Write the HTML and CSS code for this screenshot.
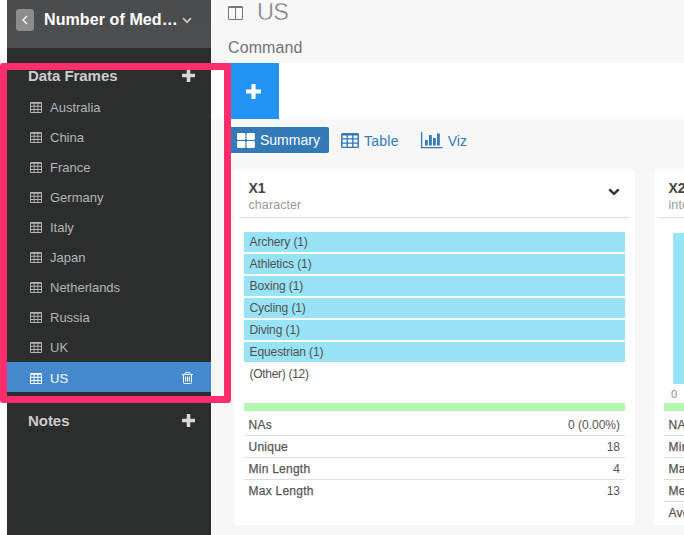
FILE: index.html
```html
<!DOCTYPE html>
<html lang="en">
<head>
<meta charset="utf-8">
<title>US - Data Frames</title>
<link rel="stylesheet" href="styles.css">
</head>
<body>
<svg class="defs" width="0" height="0">
  <symbol id="table" viewBox="0 0 12 10" preserveAspectRatio="none"><path fill="currentColor" fill-rule="evenodd" d="M1 0h10a1 1 0 0 1 1 1v8a1 1 0 0 1-1 1H1a1 1 0 0 1-1-1V1a1 1 0 0 1 1-1zM1 1.6v1.9h2.7V1.6zM4.6 1.6v1.9h2.8V1.6zM8.3 1.6v1.9H11V1.6zM1 4.4v1.9h2.7V4.4zM4.6 4.4v1.9h2.8V4.4zM8.3 4.4v1.9H11V4.4zM1 7.2v1.9h2.7V7.2zM4.6 7.2v1.9h2.8V7.2zM8.3 7.2v1.9H11V7.2z"/></symbol>
  <symbol id="plus" viewBox="0 0 13 13"><path fill="currentColor" d="M5.2 0h2.6q.5 0 .5.5v4.2h4.2q.5 0 .5.5v2.6q0 .5-.5.5H8.3v4.2q0 .5-.5.5H5.2q-.5 0-.5-.5V8.3H.5Q0 8.3 0 7.8V5.2q0-.5.5-.5h4.2V.5q0-.5.5-.5z"/></symbol>
</svg>
<div class="app">
  <aside class="sidebar">
    <header class="project">
      <span class="back"><svg width="6" height="10" viewBox="0 0 6 10"><path d="M5 1 1 5l4 4" fill="none" stroke="#fff" stroke-width="1.3"/></svg></span>
      <span class="project-name">Number of Med…</span>
      <svg class="caret" width="10" height="7" viewBox="0 0 10 7"><path d="M1 1.2 5 5.2l4-4" fill="none" stroke="#c3c4c5" stroke-width="1.7"/></svg>
    </header>
    <h2 class="section"><span>Data Frames</span><svg width="13" height="13"><use href="#plus"/></svg></h2>
    <ul class="frames">
      <li><svg width="12" height="11"><use href="#table"/></svg><span>Australia</span></li>
      <li><svg width="12" height="11"><use href="#table"/></svg><span>China</span></li>
      <li><svg width="12" height="11"><use href="#table"/></svg><span>France</span></li>
      <li><svg width="12" height="11"><use href="#table"/></svg><span>Germany</span></li>
      <li><svg width="12" height="11"><use href="#table"/></svg><span>Italy</span></li>
      <li><svg width="12" height="11"><use href="#table"/></svg><span>Japan</span></li>
      <li><svg width="12" height="11"><use href="#table"/></svg><span>Netherlands</span></li>
      <li><svg width="12" height="11"><use href="#table"/></svg><span>Russia</span></li>
      <li><svg width="12" height="11"><use href="#table"/></svg><span>UK</span></li>
      <li class="active"><svg width="12" height="11"><use href="#table"/></svg><span>US</span>
        <svg class="trash" width="11" height="12" viewBox="0 0 11 12"><path d="M0 2.5h11M3.3 2.5V1q0-.5.5-.5h3.4q.5 0 .5.5v1.5M1.5 2.5v8q0 1 1 1h6q1 0 1-1v-8M3.7 4.5v5M5.5 4.5v5M7.3 4.5v5" fill="none" stroke="#fff" stroke-width="1"/></svg></li>
    </ul>
    <h2 class="section notes"><span>Notes</span><svg width="13" height="13"><use href="#plus"/></svg></h2>
  </aside>
  <main class="content">
    <div class="title"><svg width="15" height="14" viewBox="0 0 15 14"><path d="M1 .5h13q.5 0 .5.5v12q0 .5-.5.5H1q-.5 0-.5-.5V1q0-.5.5-.5zM.5 1.5h14M7.5 1v12" fill="none" stroke="#777"/></svg><h1>US</h1></div>
    <div class="command-label">Command</div>
    <div class="command"><button class="add"><svg width="15" height="15"><use href="#plus"/></svg></button></div>
    <nav class="tabs">
      <a class="tab selected"><svg width="18" height="15" viewBox="0 0 18 15"><g fill="#fff"><rect width="8.4" height="7" rx="1.2"/><rect x="9.5" width="8.4" height="7" rx="1.2"/><rect y="8" width="8.4" height="7" rx="1.2"/><rect x="9.5" y="8" width="8.4" height="7" rx="1.2"/></g></svg><span>Summary</span></a>
      <a class="tab tab-table"><svg width="18" height="15"><use href="#table"/></svg><span>Table</span></a>
      <a class="tab tab-viz"><svg width="22" height="17" viewBox="0 0 22 17"><path fill="currentColor" d="M0 0h1.3v15H21.5v1.3H0zM4 8h2.8v5.5H4zM8 3h2.8v10.5H8zM12 6h2.8v7.5H12zM16 1.5h2.8v12H16z"/></svg><span>Viz</span></a>
    </nav>
    <div class="cards">
      <section class="card">
        <header><div><h3>X1</h3><p>character</p></div><svg width="12" height="8" viewBox="0 0 12 8"><path d="m1.3 1.3 4.7 4.5 4.7-4.5" fill="none" stroke="#333" stroke-width="2.5"/></svg></header>
        <ul class="bars"><li>Archery (1)</li><li>Athletics (1)</li><li>Boxing (1)</li><li>Cycling (1)</li><li>Diving (1)</li><li>Equestrian (1)</li><li class="other">(Other) (12)</li></ul>
        <div class="valid"></div>
        <dl><div><dt>NAs</dt><dd>0 (0.00%)</dd></div><div><dt>Unique</dt><dd>18</dd></div><div><dt>Min Length</dt><dd>4</dd></div><div><dt>Max Length</dt><dd>13</dd></div></dl>
      </section>
      <section class="card">
        <header><div><h3>X2</h3><p>integer</p></div></header>
        <div class="histogram"><div class="column"></div><span>0</span></div>
        <div class="valid"></div>
        <dl><div><dt>NAs</dt></div><div><dt>Min</dt></div><div><dt>Max</dt></div><div><dt>Median</dt></div><div><dt>Average</dt></div></dl>
      </section>
    </div>
  </main>
</div>
<div class="highlight"></div>
</body>
</html>
```
FILE: styles.css
```css
* { box-sizing: border-box; margin: 0; padding: 0; }
html, body { width: 684px; height: 535px; overflow: hidden; background: #fff; }
body { font-family: "Liberation Sans", Arial, sans-serif; color: #555; }
ul { list-style: none; }
svg { display: block; flex: none; }
.defs { position: absolute; }
.app { display: flex; height: 535px; padding-left: 7px; }
.sidebar { flex: none; width: 204px; background: #2c2e2d; color: #b4b4b4; }
.project { display: flex; align-items: center; height: 48px; padding: 0 0 8px 9px; background: linear-gradient(#4a4b4d, #4d4e50); color: #fff; }
.back { display: flex; align-items: center; justify-content: center; width: 18px; height: 22px; border-radius: 3px; background: #8c8c8c; }
.project-name { width: 134px; margin-left: 10px; font-size: 16px; font-weight: bold; white-space: nowrap; letter-spacing: .1px; }
.caret { margin-left: 4px; }
.section { display: flex; align-items: center; justify-content: space-between; height: 32px; margin-top: 12px; padding: 0 16px 2px 21px; font-size: 15px; font-weight: bold; letter-spacing: -.05px; color: #ccc; }
.section svg { margin-top: 1px; color: #d8d8d8; }
.notes { margin-top: 13px; }
.frames li { display: flex; align-items: center; gap: 8px; height: 30px; padding: 1px 18px 0 23px; font-size: 13px; line-height: 28px; }
.frames li > svg:first-child { margin-top: -1px; }
.frames .active { background: #4489cd; color: #fff; padding-top: 3px; }
.frames .trash { margin: -2px 0 0 auto; }
.content { flex: none; width: 473px; background: #f7f7f7; overflow: hidden; }
.title { display: flex; align-items: flex-start; height: 36px; padding-left: 17px; }
.title svg { margin-top: 6px; }
h1 { margin: 0 0 0 14px; font-size: 23.5px; line-height: 25px; font-weight: normal; letter-spacing: -.6px; color: #777; -webkit-text-stroke: .5px #f7f7f7; }
.command-label { height: 27px; padding-left: 17px; font-size: 16px; line-height: 23px; letter-spacing: .1px; color: #737373; }
.command { height: 56px; padding-left: 17px; background: #fff; }
.add { display: flex; align-items: center; justify-content: center; width: 51px; height: 56px; border: 0; background: #2292f5; color: #fff; }
.tabs { display: flex; align-items: center; height: 50px; padding: 8px 0 16px 17px; font-size: 14px; color: #337ab7; }
.tab { display: flex; align-items: center; gap: 5px; }
.selected { width: 101px; height: 26px; padding-left: 9px; border-radius: 2px; background: #337ab7; color: #fff; }
.tab-table { margin-left: 12px; padding-top: 1px; letter-spacing: .25px; }
.tab-viz { margin-left: 22px; padding-top: 1px; }
.cards { display: flex; gap: 19px; padding-left: 23px; }
.card { flex: none; width: 401px; height: 356px; padding: 0 5px; border-radius: 3px; background: #fff; }
.card header { display: flex; justify-content: space-between; height: 49px; padding: 10px 10px 0 9.5px; border-bottom: 1px solid #ddd; }
.card header svg { margin-top: 9px; }
h3 { font-size: 14px; line-height: 18px; letter-spacing: -.2px; color: #444; }
.card p { font-size: 12.5px; line-height: 17px; letter-spacing: .08px; color: #999; }
.bars { height: 171px; margin: 14px 5px 0; font-size: 12px; letter-spacing: -.1px; color: #505050; }
.bars li { height: 20px; margin-bottom: 2px; padding-left: 5.5px; line-height: 20px; background: #99e3f7; }
.bars .other { background: none; letter-spacing: -.3px; }
.valid { height: 8px; margin: 0 5px; background: #b4f7ae; }
dl { margin: 3px 5px 0; font-size: 12px; }
dl div { display: flex; justify-content: space-between; height: 22px; padding: 0 5px 0 4.5px; line-height: 22px; border-bottom: 1px solid #ddd; }
dl div:last-child { border: 0; }
dt { letter-spacing: .25px; -webkit-text-stroke: .25px #555; }
.histogram { height: 171px; margin: 14px 5px 0; padding: 1px 0 0 9px; }
.column { width: 80px; height: 151px; background: #99e3f7; }
.histogram span { display: block; margin: 3px 0 0 -2px; font-size: 11px; line-height: 14px; color: #888; }
.highlight { position: absolute; left: 0; top: 63px; width: 231px; height: 340px; border: 7px solid #ff2d6b; border-radius: 3px; }
```
